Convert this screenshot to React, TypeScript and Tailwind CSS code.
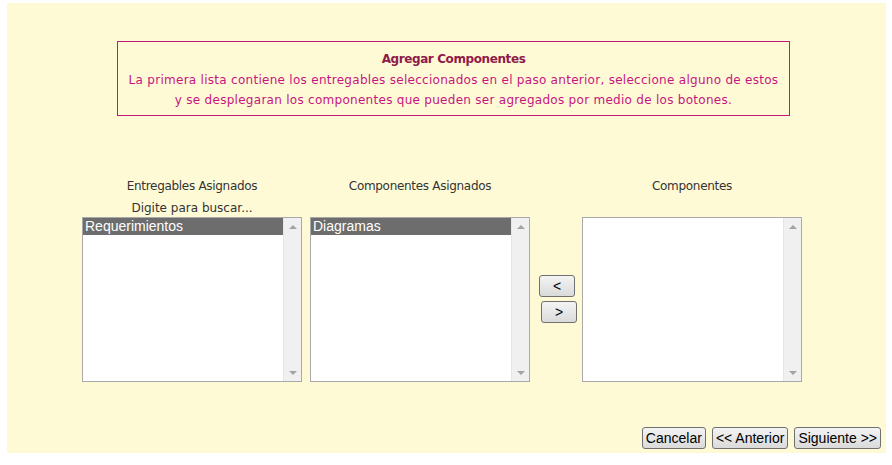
import React from "react";

function ScrollBar() {
  return (
    <div className="w-[18px] h-full bg-[#f0f0f0] border-l border-[#e6e6e6] flex flex-col justify-between items-center">
      <div className="h-[17px] flex items-center justify-center">
        <div className="w-0 h-0 border-l-[4px] border-r-[4px] border-b-[4px] border-l-transparent border-r-transparent border-b-[#a3a3a3]" />
      </div>
      <div className="h-[17px] flex items-center justify-center">
        <div className="w-0 h-0 border-l-[4px] border-r-[4px] border-t-[4px] border-l-transparent border-r-transparent border-t-[#a3a3a3]" />
      </div>
    </div>
  );
}

function ListBox({ items }: { items: string[] }) {
  return (
    <div className="w-[220px] h-[165px] bg-white border border-[#a9a9a9] flex">
      <div className="flex-1 flex flex-col">
        {items.map((it) => (
          <div
            key={it}
            className="h-[17px] bg-[#6d6d6d] text-white text-[14px] leading-[17px] pl-[2px] font-['Liberation_Sans',Arial,sans-serif]"
          >
            {it}
          </div>
        ))}
      </div>
      <ScrollBar />
    </div>
  );
}

const btn =
  "h-[22px] px-[3px] rounded-[3px] border border-[#707070] bg-gradient-to-b from-[#f4f4f4] to-[#dadada] text-black text-[14px] leading-[20px] font-['Liberation_Sans',Arial,sans-serif]";

export default function App() {
  return (
    <div className="w-[892px] h-[465px] bg-white pt-[3px] pl-[7px]">
      <div className="w-[879px] h-[450px] bg-[#fffad6] flex flex-col font-['DejaVu_Sans',Verdana,sans-serif] text-[12px]">
        <div className="ml-[110px] mt-[38px] w-[673px] h-[75px] border border-[#c2187a] flex flex-col items-center pt-[7px] leading-[20.5px]">
          <div className="font-bold text-[#8e1a4a] tracking-[-0.4px]">Agregar Componentes</div>
          <div className="text-[#c7157f] text-center whitespace-nowrap tracking-[0.28px]">
            La primera lista contiene los entregables seleccionados en el paso anterior, seleccione alguno de estos
            <br />y se desplegaran los componentes que pueden ser agregados por medio de los botones.
          </div>
        </div>

        <div className="flex mt-[59px] ml-[75px] text-[#333333]">
          <div className="w-[220px] flex flex-col items-center">
            <div className="h-[22px] leading-[22px] tracking-[-0.3px]">Entregables Asignados</div>
            <div className="h-[20px] leading-[22px]">Digite para buscar...</div>
            <ListBox items={["Requerimientos"]} />
          </div>
          <div className="w-[220px] ml-[8px] flex flex-col items-center">
            <div className="h-[22px] leading-[22px] tracking-[-0.3px]">Componentes Asignados</div>
            <div className="h-[20px]" />
            <ListBox items={["Diagramas"]} />
          </div>
          <div className="w-[52px] flex flex-col pt-[100px] pl-[9px] gap-[4px]">
            <button className={btn + " w-[36px]"}>&lt;</button>
            <button className={btn + " w-[36px] ml-[2px]"}>&gt;</button>
          </div>
          <div className="w-[220px] flex flex-col items-center">
            <div className="h-[22px] leading-[22px] tracking-[-0.3px]">Componentes</div>
            <div className="h-[20px]" />
            <ListBox items={[]} />
          </div>
        </div>

        <div className="flex justify-end gap-[6px] mt-auto mb-[4px] mr-[5px]">
          <button className={btn}>Cancelar</button>
          <button className={btn}>&lt;&lt; Anterior</button>
          <button className={btn}>Siguiente &gt;&gt;</button>
        </div>
      </div>
    </div>
  );
}
